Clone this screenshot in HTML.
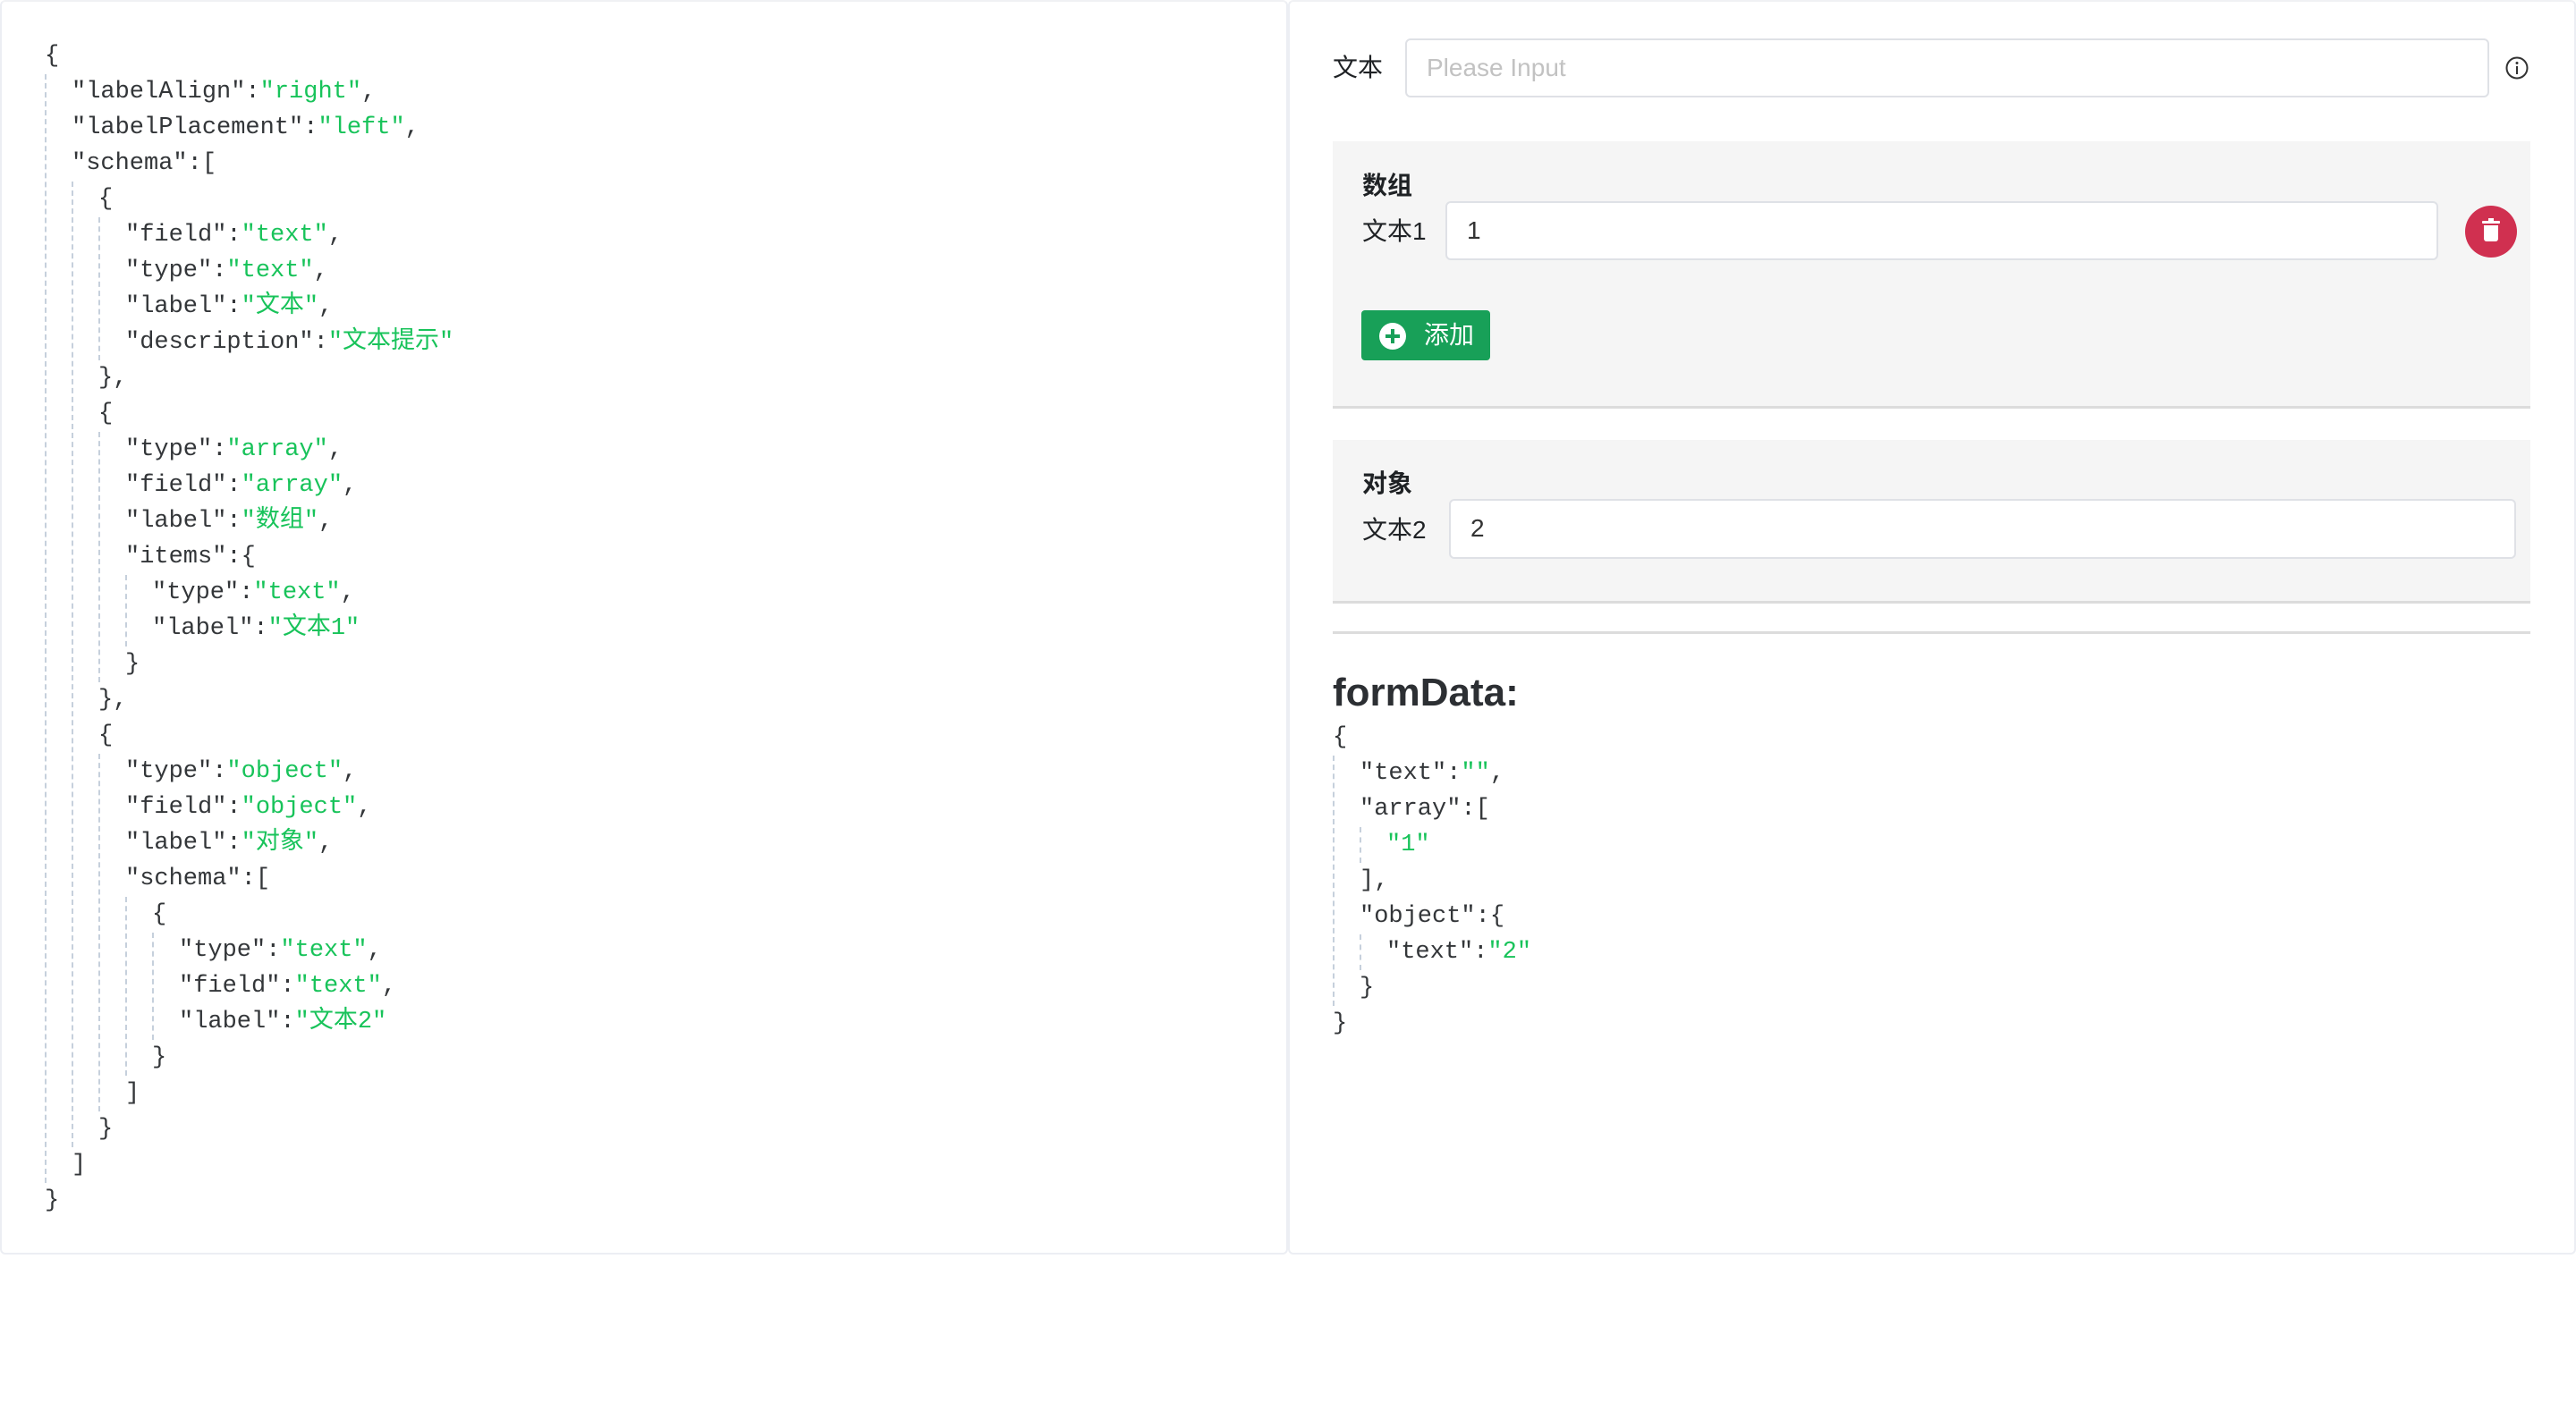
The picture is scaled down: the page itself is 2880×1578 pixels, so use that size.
<!DOCTYPE html>
<html><head><meta charset="utf-8"><style>
*{box-sizing:border-box;margin:0;padding:0}
body{width:2880px;height:1578px;background:#fff;position:relative;font-family:"Liberation Sans","Noto Sans CJK SC",sans-serif;color:#1f2225;overflow:hidden}
.panel{position:absolute;top:0;height:1403px;border:2px solid #eceef3;border-top:2px solid #f0f1f4;border-radius:6px;background:#fff}
.code{font-family:"Liberation Mono","Noto Sans CJK SC",monospace;font-size:27px;line-height:40px;color:#333639;white-space:nowrap}
.code .b{border-left:2px dashed #c6d0dc;padding-left:28px;margin-left:0}
.code .g{color:#18c35a}
.code .l{height:40px}
.lbl{position:absolute;font-size:28px;color:#1f2225;line-height:40px}
.inp{position:absolute;background:#fff;border:2px solid #dfe1e6;border-radius:6px;font-size:28px;line-height:62px;padding-left:22px;color:#333}
.box{position:absolute;left:1490px;width:1339px;background:#f5f5f5;border-bottom:3px solid #dcdcdc}
</style></head><body>
<div class="panel" style="left:0;width:1440px">
<div class="code" style="position:absolute;left:48px;top:41px">
<div class="l">{</div>
<div class="b">
<div class="l">"labelAlign":<span class="g">"right"</span>,</div>
<div class="l">"labelPlacement":<span class="g">"left"</span>,</div>
<div class="l">"schema":[</div>
<div class="b">
<div class="l">{</div>
<div class="b">
<div class="l">"field":<span class="g">"text"</span>,</div>
<div class="l">"type":<span class="g">"text"</span>,</div>
<div class="l">"label":<span class="g">"文本"</span>,</div>
<div class="l">"description":<span class="g">"文本提示"</span></div>
</div>
<div class="l">},</div>
<div class="l">{</div>
<div class="b">
<div class="l">"type":<span class="g">"array"</span>,</div>
<div class="l">"field":<span class="g">"array"</span>,</div>
<div class="l">"label":<span class="g">"数组"</span>,</div>
<div class="l">"items":{</div>
<div class="b">
<div class="l">"type":<span class="g">"text"</span>,</div>
<div class="l">"label":<span class="g">"文本1"</span></div>
</div>
<div class="l">}</div>
</div>
<div class="l">},</div>
<div class="l">{</div>
<div class="b">
<div class="l">"type":<span class="g">"object"</span>,</div>
<div class="l">"field":<span class="g">"object"</span>,</div>
<div class="l">"label":<span class="g">"对象"</span>,</div>
<div class="l">"schema":[</div>
<div class="b">
<div class="l">{</div>
<div class="b">
<div class="l">"type":<span class="g">"text"</span>,</div>
<div class="l">"field":<span class="g">"text"</span>,</div>
<div class="l">"label":<span class="g">"文本2"</span></div>
</div>
<div class="l">}</div>
</div>
<div class="l">]</div>
</div>
<div class="l">}</div>
</div>
<div class="l">]</div>
</div>
<div class="l">}</div>
</div>
</div>
<div class="panel" style="left:1440px;width:1440px"></div>

<div class="lbl" style="left:1490px;top:56px">文本</div>
<div class="inp" style="left:1571px;top:43px;width:1212px;height:66px;color:#c2c2c2">Please Input</div>
<svg style="position:absolute;left:2800px;top:62px" width="28" height="28" viewBox="0 0 28 28"><circle cx="14" cy="14" r="11.5" fill="none" stroke="#333" stroke-width="2"/><circle cx="14" cy="8.5" r="1.5" fill="#333"/><rect x="13" y="12" width="2" height="9" fill="#333"/></svg>

<div class="box" style="top:158px;height:299px"></div>
<div class="lbl" style="left:1523px;top:188px;font-weight:bold">数组</div>
<div class="lbl" style="left:1523px;top:239px">文本1</div>
<div class="inp" style="left:1616px;top:225px;width:1110px;height:66px">1</div>
<svg style="position:absolute;left:2756px;top:230px" width="58" height="58" viewBox="0 0 58 58"><circle cx="29" cy="29" r="29" fill="#d03050"/><rect x="19" y="17" width="20" height="3" rx="1" fill="#fff"/><rect x="26" y="14" width="6" height="3" fill="#fff"/><path d="M21 22h16v15a3 3 0 0 1-3 3h-10a3 3 0 0 1-3-3z" fill="#fff"/></svg>
<div style="position:absolute;left:1522px;top:347px;width:144px;height:56px;background:#18a058;border-radius:4px;color:#fff;font-size:28px;line-height:56px;padding-left:70px">添加</div>
<svg style="position:absolute;left:1541px;top:360px" width="32" height="32" viewBox="0 0 32 32"><circle cx="16" cy="16" r="15" fill="#fff"/><rect x="14" y="8" width="4" height="16" fill="#18a058"/><rect x="8" y="14" width="16" height="4" fill="#18a058"/></svg>

<div class="box" style="top:492px;height:183px"></div>
<div class="lbl" style="left:1523px;top:521px;font-weight:bold">对象</div>
<div class="lbl" style="left:1523px;top:573px">文本2</div>
<div class="inp" style="left:1620px;top:558px;width:1193px;height:67px">2</div>

<div style="position:absolute;left:1490px;top:706px;width:1339px;height:3px;background:#dcdcdc"></div>
<div style="position:absolute;left:1490px;top:747px;font-size:44px;font-weight:bold;color:#2c2f33;line-height:56px">formData:</div>
<div class="code" style="position:absolute;left:1490px;top:805px">
<div class="l">{</div>
<div class="b">
<div class="l">"text":<span class="g">""</span>,</div>
<div class="l">"array":[</div>
<div class="b"><div class="l"><span class="g">"1"</span></div></div>
<div class="l">],</div>
<div class="l">"object":{</div>
<div class="b"><div class="l">"text":<span class="g">"2"</span></div></div>
<div class="l">}</div>
</div>
<div class="l">}</div>
</div>
</body></html>
